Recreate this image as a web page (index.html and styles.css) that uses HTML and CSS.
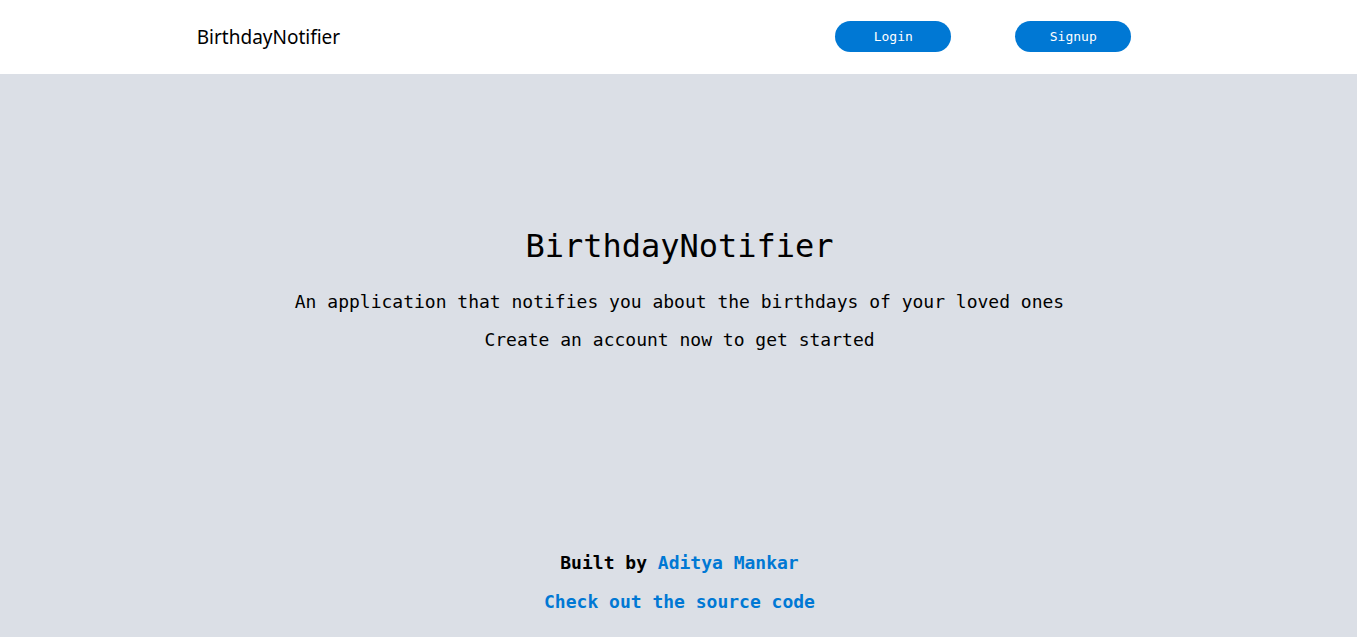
FILE: index.html
```
<!DOCTYPE html>
<html lang="en">
<head>
<meta charset="utf-8">
<meta name="viewport" content="width=device-width, initial-scale=1">
<title>BirthdayNotifier</title>
<link rel="stylesheet" href="styles.css">
</head>
<body>
<header class="navbar">
  <span class="brand">BirthdayNotifier</span>
  <nav class="actions">
    <button class="btn" type="button">Login</button>
    <button class="btn" type="button">Signup</button>
  </nav>
</header>
<main class="hero">
  <h1 class="title">BirthdayNotifier</h1>
  <p class="lead">An application that notifies you about the birthdays of your loved ones</p>
  <p class="lead">Create an account now to get started</p>
</main>
<footer class="footer">
  <p class="credit">Built by <a class="link" href="#author">Aditya Mankar</a></p>
  <p class="credit"><a class="link" href="#source">Check out the source code</a></p>
</footer>
</body>
</html>
```

FILE: styles.css
```
* {
  box-sizing: border-box;
  margin: 0;
}

body {
  display: flex;
  flex-direction: column;
  min-height: 100vh;
  background: #dbdfe6;
  color: #000;
  font-family: Consolas, "DejaVu Sans Mono", monospace;
}

.navbar {
  display: flex;
  align-items: center;
  justify-content: space-between;
  padding: 21px 14.5% 22px;
  background: #fff;
}

.brand {
  font-family: "Trebuchet MS", "Noto Sans", sans-serif;
  font-size: 19px;
  line-height: 30px;
}

.actions {
  display: flex;
  gap: 64px;
  margin-right: 29px;
}

.btn {
  width: 116px;
  height: 31px;
  border: 0;
  border-radius: 16px;
  background: #0078d4;
  color: #fff;
  font-family: inherit;
  font-size: 13px;
  cursor: pointer;
}

.hero {
  display: flex;
  flex: 1;
  flex-direction: column;
  align-items: center;
  padding: 152px 16px 32px 18px;
  text-align: center;
}

.title {
  margin-bottom: 24px;
  font-size: 32px;
  font-weight: 400;
  line-height: 40px;
}

.lead {
  margin-bottom: 14px;
  font-size: 18px;
  line-height: 24px;
}

.footer {
  padding: 0 16px 8px 18px;
  text-align: center;
}

.credit {
  margin-bottom: 15px;
  font-size: 18px;
  font-weight: 700;
  line-height: 24px;
}

.link {
  color: #0078d4;
  text-decoration: none;
}
```
